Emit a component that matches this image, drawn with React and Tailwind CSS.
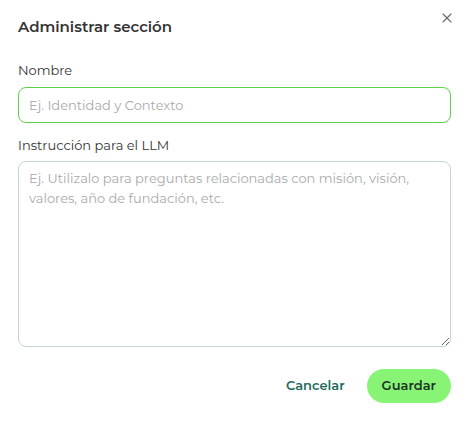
import { X } from "lucide-react";

export default function App() {
  return (
    <div
      className="relative h-[422px] w-[469px] bg-white px-[18px] text-[#333]"
      style={{ fontFamily: "Montserrat, 'DejaVu Sans', sans-serif" }}
    >
      <button className="absolute right-[14px] top-[10px] text-[#666]">
        <X size={16} strokeWidth={1.6} />
      </button>

      <h2 className="pt-[16px] text-[15px] font-semibold leading-[22px] text-[#333]">
        Administrar sección
      </h2>

      <label className="mt-[22px] block text-[13px] leading-[20px] text-[#333]">Nombre</label>
      <input
        autoFocus
        className="mt-[7px] block h-[36px] w-full rounded-[8px] border border-[#5fd14a] px-[10px] text-[13px] outline-none placeholder:text-[#aaa]"
        placeholder="Ej. Identidad y Contexto"
      />

      <label className="mt-[12px] block text-[13px] leading-[20px] text-[#333]">
        Instrucción para el LLM
      </label>
      <textarea
        className="mt-[6px] block h-[186px] w-full rounded-[8px] border border-[#c4d6d0] px-[10px] py-[6px] text-[13px] leading-[20px] outline-none placeholder:text-[#aaa]"
        placeholder="Ej. Utilizalo para preguntas relacionadas con misión, visión, valores, año de fundación, etc."
      />

      <div className="mt-[22px] flex items-center justify-end gap-[22px]">
        <button className="text-[13px] font-semibold text-[#1e6b5c]">Cancelar</button>
        <button className="h-[34px] rounded-full bg-[#88f476] px-[15px] text-[13px] font-semibold text-[#1c3326]">
          Guardar
        </button>
      </div>
    </div>
  );
}
